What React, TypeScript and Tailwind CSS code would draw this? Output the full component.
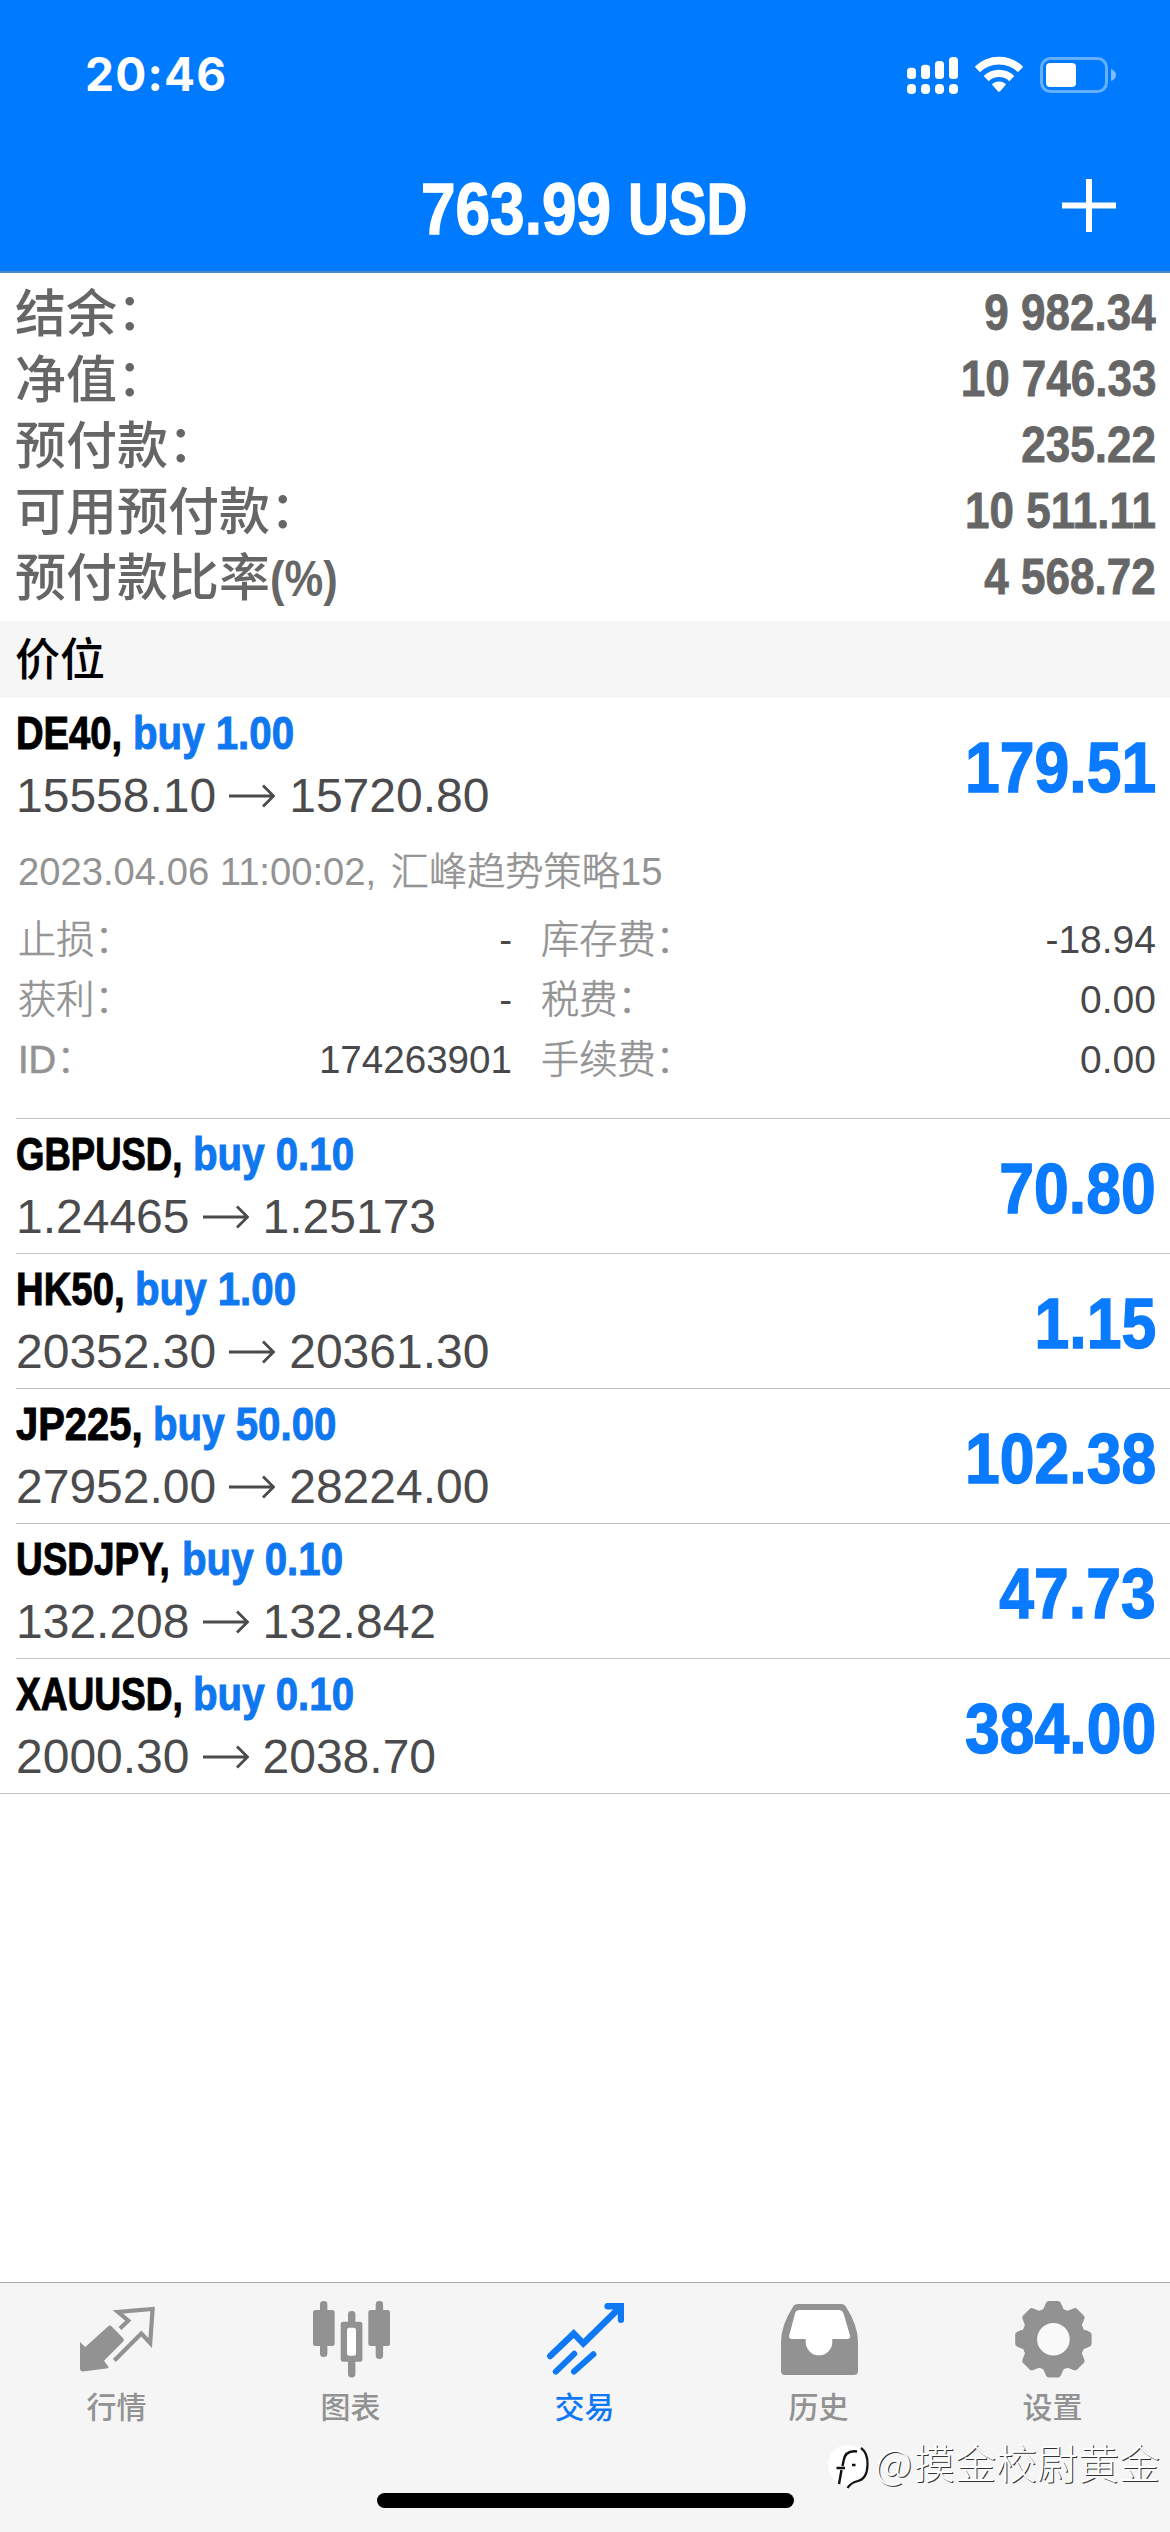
import { clsx } from "clsx";
import type { ReactNode } from "react";

const BALANCE_ROWS = [
  { label: "结余", colon: true, value: "9 982.34" },
  { label: "净值", colon: true, value: "10 746.33" },
  { label: "预付款", colon: true, value: "235.22" },
  { label: "可用预付款", colon: true, value: "10 511.11" },
  { label: "预付款比率", colon: false, value: "4 568.72" },
];

// box / squeeze keep the condensed symbol names tight in front of the side
const POSITIONS = [
  { symbol: "DE40", side: "buy 1.00", open: "15558.10", current: "15720.80", profit: "179.51", box: "w-[117px]", squeeze: "scale-x-[0.813]" },
  { symbol: "GBPUSD", side: "buy 0.10", open: "1.24465", current: "1.25173", profit: "70.80", box: "w-[177px]", squeeze: "scale-x-[0.777]" },
  { symbol: "HK50", side: "buy 1.00", open: "20352.30", current: "20361.30", profit: "1.15", box: "w-[119px]", squeeze: "scale-x-[0.815]" },
  { symbol: "JP225", side: "buy 50.00", open: "27952.00", current: "28224.00", profit: "102.38", box: "w-[137px]", squeeze: "scale-x-[0.85]" },
  { symbol: "USDJPY", side: "buy 0.10", open: "132.208", current: "132.842", profit: "47.73", box: "w-[166px]", squeeze: "scale-x-[0.785]" },
  { symbol: "XAUUSD", side: "buy 0.10", open: "2000.30", current: "2038.70", profit: "384.00", box: "w-[177px]", squeeze: "scale-x-[0.789]" },
];

const DETAILS = [
  { label: "止损", value: "-", feeLabel: "库存费", fee: "-18.94" },
  { label: "获利", value: "-", feeLabel: "税费", fee: "0.00" },
  { label: "ID", value: "174263901", feeLabel: "手续费", fee: "0.00" },
];

/* Status bar */

function SignalIcon() {
  const bars = [12.7, 9.7, 6, 2];
  return (
    <svg className="w-[51px] h-10 fill-white" viewBox="0 0 51 40">
      {bars.map((top, i) => (
        <g key={i}>
          <rect x={i * 14} y={top} width="9" height={24 - top} rx="3.5" />
          <rect x={i * 14} y="29" width="9" height="10" rx="4" />
        </g>
      ))}
    </svg>
  );
}

function WifiIcon() {
  return (
    <svg className="w-12 h-10" viewBox="0 0 48 40" fill="none" stroke="white">
      <path d="M2.4 14.4A31 31 0 0 1 45.6 14.4" strokeWidth="7.6" />
      <path d="M11.2 23.6A18.3 18.3 0 0 1 36.8 23.6" strokeWidth="7.2" />
      <path d="M24 26.4C27 26.4 29.4 27.6 31 29.6L25.2 36.2Q24 37.4 22.8 36.2L17 29.6C18.6 27.6 21 26.4 24 26.4Z" fill="white" stroke="none" />
    </svg>
  );
}

function BatteryIcon() {
  return (
    <svg className="w-[76px] h-10" viewBox="0 0 76 40">
      <rect x="1.5" y="3.5" width="65" height="33" rx="9" fill="none" stroke="white" strokeOpacity="0.4" strokeWidth="3" />
      <rect x="6" y="8" width="30" height="24" rx="4" fill="white" />
      <path d="M71 14Q76 16 76 20T71 26Z" fill="white" fillOpacity="0.5" />
    </svg>
  );
}

/* Tab icons, all on a 78px box */

function QuotesIcon() {
  return (
    <svg className="w-[78px] h-[78px]" viewBox="0 0 78 78" fill="currentColor">
      <path d="M2 42L7.3 47L30.5 26Q32 24.8 33.5 26.2L45.4 38.4Q46.6 40 45.2 41.6L26 60.7L30.6 67L30 68.3L5 71.4Q2 71.6 2 68.6Z" />
      <path
        d="M42 28.6L50.3 20.7L40 12L74.6 9L72.2 43L63.3 33.6L36.4 60.4"
        fill="none"
        stroke="currentColor"
        strokeWidth="4.2"
      />
    </svg>
  );
}

function ChartIcon() {
  return (
    <svg className="w-[78px] h-[78px]" viewBox="0 0 78 78" fill="currentColor">
      <rect x="8" y="1" width="7.4" height="56" rx="3.4" />
      <rect x="1" y="10" width="21.7" height="36" rx="2.5" />
      <rect x="36" y="11" width="7.4" height="18" rx="3.4" />
      <rect x="36" y="56" width="7.4" height="21.4" rx="3.4" />
      <rect x="28.7" y="21.7" width="21.7" height="40" rx="2.5" />
      <rect x="35" y="27.7" width="9" height="28" rx="2.5" fill="white" />
      <rect x="63.7" y="1" width="7.4" height="58" rx="3.4" />
      <rect x="56.3" y="10" width="21.7" height="36" rx="2.5" />
    </svg>
  );
}

function TradeIcon() {
  return (
    <svg
      className="w-[78px] h-[78px]"
      viewBox="0 0 78 78"
      fill="none"
      stroke="currentColor"
      strokeWidth="6.4"
      strokeLinecap="round"
    >
      <path d="M4.2 56L27.7 33.6L37.3 43.4L74 7.4" />
      <path d="M61.6 6.2H75V19.8" />
      <path d="M28.2 53.8L9.8 71.6" strokeWidth="6" />
      <path d="M47.4 54.2L28 71.6" strokeWidth="6" />
      <path d="M70 3.2H78V12Z" fill="currentColor" stroke="none" />
    </svg>
  );
}

const TRAY_OPENING =
  "M19.6 10Q16.4 10 15.2 12.8L9.2 35.6Q8.6 39 11.6 39H25.7V42A13.3 13.3 0 0 0 52.3 42V39H67.4Q70.6 39 70 35.6L63.6 13.4Q62 10 58.6 10Z";

function HistoryIcon() {
  return (
    <svg className="w-[78px] h-[78px]" viewBox="0 0 78 78" fill="currentColor">
      <path d="M17 4H61Q64.6 4 66.4 7.4Q77.8 25 78 42V71Q78 75 74 75H5Q1 75 1 71V42Q1.2 25 12.6 7.4Q14.4 4 18 4Z" />
      <path d={TRAY_OPENING} fill="white" />
    </svg>
  );
}

// Eight teeth, each one a small trapezoid around its angle
const GEAR_POINTS = Array.from({ length: 8 }, (_, i) => i * 45)
  .flatMap((a) => [
    [29, a - 16],
    [35.6, a - 7.5],
    [35.6, a + 7.5],
    [29, a + 16],
  ])
  .map(([r, a]) => {
    const rad = (a * Math.PI) / 180;
    return `${(39.4 + r * Math.cos(rad)).toFixed(2)},${(39.2 + r * Math.sin(rad)).toFixed(2)}`;
  })
  .join(" ");

function SettingsIcon() {
  return (
    <svg className="w-[78px] h-[78px]" viewBox="0 0 78 78" fill="currentColor">
      <polygon points={GEAR_POINTS} stroke="currentColor" strokeWidth="5.8" strokeLinejoin="round" />
      <circle cx="39.4" cy="39.2" r="16.3" fill="#f9f9f9" />
    </svg>
  );
}

const TABS: { label: string; icon: ReactNode; active?: boolean }[] = [
  { label: "行情", icon: <QuotesIcon /> },
  { label: "图表", icon: <ChartIcon /> },
  { label: "交易", icon: <TradeIcon />, active: true },
  { label: "历史", icon: <HistoryIcon /> },
  { label: "设置", icon: <SettingsIcon /> },
];

function Header() {
  return (
    <header className="h-[273px] bg-[#007aff] border-b-2 border-[#4a86c8] text-white">
      <div className="h-[149px] pl-[85px] pr-[54px] flex items-center justify-between">
        <span className="font-[Inter,sans-serif] font-bold text-[46px] tracking-[1.2px]">20:46</span>
        <div className="flex items-center gap-[17px]">
          <SignalIcon />
          <WifiIcon />
          <BatteryIcon />
        </div>
      </div>
      <div className="h-[119px] pl-[52px] pr-[54px] flex items-center justify-between">
        <div className="w-[54px]" />
        <h1 className="flex font-bold text-[73px] leading-[84px] whitespace-pre [-webkit-text-stroke:1.4px]">
          <span className="w-[207px] origin-left scale-x-[0.851]">763.99 </span>
          <span className="w-[119px] origin-left scale-x-[0.775]">USD</span>
        </h1>
        <svg className="w-[54px] h-[54px] -mt-[6px]" viewBox="0 0 54 54" stroke="white" strokeWidth="6">
          <path d="M0 26.5H54M27 0V53" />
        </svg>
      </div>
    </header>
  );
}

function Position({ item }: { item: (typeof POSITIONS)[number] }) {
  return (
    <div className="h-[134px] pr-[14px] flex justify-between">
      <div className="pt-[3px]">
        <div className="flex h-[63px] leading-[63px] text-[47px] font-bold whitespace-pre [-webkit-text-stroke:1px]">
          <span className={clsx("origin-left text-black", item.box, item.squeeze)}>{item.symbol}, </span>
          <span className="origin-left scale-x-[0.856] text-[#0f78f0]">{item.side}</span>
        </div>
        <div className="flex items-center h-[63px] leading-[63px] text-[48px] text-[#4b4b4d]">
          <span>{item.open}</span>
          <svg className="w-[46px] h-6 ml-[13px] mr-[14px]" viewBox="0 0 46 24" fill="none" stroke="currentColor" strokeWidth="2.8">
            <path d="M0 12H44M34 1.5L44.5 12L34 22.5" />
          </svg>
          <span>{item.current}</span>
        </div>
      </div>
      <div className="h-full pt-[6px] flex items-center">
        <span className="origin-right scale-x-[0.88] text-[71px] font-bold text-[#0a7aff] [-webkit-text-stroke:1.4px]">
          {item.profit}
        </span>
      </div>
    </div>
  );
}

function DetailLabel({ children }: { children: ReactNode }) {
  return (
    <span className="[-webkit-text-stroke:0.6px]">
      {children}
      <span className="inline-block -translate-y-[1px]">：</span>
    </span>
  );
}

function PositionDetails() {
  return (
    <div className="pt-[9px] pb-7 pr-[14px] pl-[2px] text-[38.2px] text-[#939393] font-light">
      <p className="h-[62px] leading-[62px] mb-[7px]">
        2023.04.06 11:00:02,{" "}
        <span className="ml-[4px] [-webkit-text-stroke:0.6px]">汇峰趋势策略</span>15
      </p>
      {DETAILS.map((row) => (
        <div key={row.label} className="flex h-[60px] leading-[60px]">
          <div className="w-[494px] mr-[29px] flex justify-between">
            <DetailLabel>{row.label}</DetailLabel>
            <span className="text-[38.6px] text-[#48484a]">{row.value}</span>
          </div>
          <div className="flex-1 flex justify-between">
            <DetailLabel>{row.feeLabel}</DetailLabel>
            <span className="text-[39px] text-[#48484a]">{row.fee}</span>
          </div>
        </div>
      ))}
    </div>
  );
}

function TabBar() {
  return (
    <nav className="relative mt-auto h-[250px] flex flex-col bg-[#f5f5f5] border-t border-[#a9a9ab]">
      <div className="grid grid-cols-5 pt-[17px]">
        {TABS.map((tab) => (
          <div
            key={tab.label}
            className={clsx("flex flex-col items-center", tab.active ? "text-[#0f78f5]" : "text-[#929292]")}
          >
            {tab.icon}
            <span className="mt-[7px] pr-px text-[30px] leading-[40px] font-medium font-['Noto_Sans_CJK_SC',sans-serif]">
              {tab.label}
            </span>
          </div>
        ))}
      </div>

      {/* Home indicator */}
      <div className="mt-auto mb-6 mx-auto w-[417px] h-[15px] rounded-full bg-black" />

      {/* Author mark over the bar */}
      <div className="absolute right-[10px] top-[150px] flex items-center">
        <svg className="w-[49px] h-[56px]" viewBox="0 0 47 56">
          <circle cx="21" cy="32" r="20" fill="white" />
          <path d="M34 15Q41 20 40.5 32Q40 46 31 48Q24 49.5 20.5 55" fill="none" stroke="#111" strokeWidth="2.2" />
          <path d="M30 18.5Q18 17 16.5 28L15.5 33M9.5 35H18M14.5 37L12 51M25 32H28.5" fill="none" stroke="#111" strokeWidth="2.4" />
        </svg>
        <span className="font-['Noto_Sans_CJK_SC',sans-serif] font-light text-[41px] leading-[56px] text-white [text-shadow:1px_1px_0_#333]">
          <span className="tracking-[2px]">@</span>摸金校尉黄金
        </span>
      </div>
    </nav>
  );
}

export default function App() {
  return (
    <div className="w-[1170px] h-[2532px] flex flex-col overflow-hidden bg-white font-['Liberation_Sans','Noto_Sans_CJK_SC',sans-serif]">
      <Header />

      {/* Account summary */}
      <section className="h-[348px] pt-[7px] pl-[15px] pr-[14px] text-[#666666]">
        {BALANCE_ROWS.map((row) => (
          <div key={row.label} className="h-[66px] leading-[66px] flex justify-between">
            <span className="pt-[2px] flex font-medium text-[51px]">
              {row.label}
              {row.colon ? (
                <span className="-translate-y-[2px]">：</span>
              ) : (
                <span className="origin-left scale-x-[0.87] font-bold text-[50px]">(%)</span>
              )}
            </span>
            <span className="origin-right scale-x-[0.88] font-bold text-[50px] [-webkit-text-stroke:0.8px]">
              {row.value}
            </span>
          </div>
        ))}
      </section>

      {/* Positions */}
      <h2 className="h-[77px] pt-[2px] pl-[15px] bg-[#f6f6f6] text-black font-medium text-[45px] leading-[75px]">价位</h2>
      <ul>
        {POSITIONS.map((item, i) => (
          <li
            key={item.symbol}
            className={clsx("border-b border-[#c4c4c6]", i < POSITIONS.length - 1 ? "ml-4" : "pl-4")}
          >
            <Position item={item} />
            {i === 0 && <PositionDetails />}
          </li>
        ))}
      </ul>

      <TabBar />
    </div>
  );
}
